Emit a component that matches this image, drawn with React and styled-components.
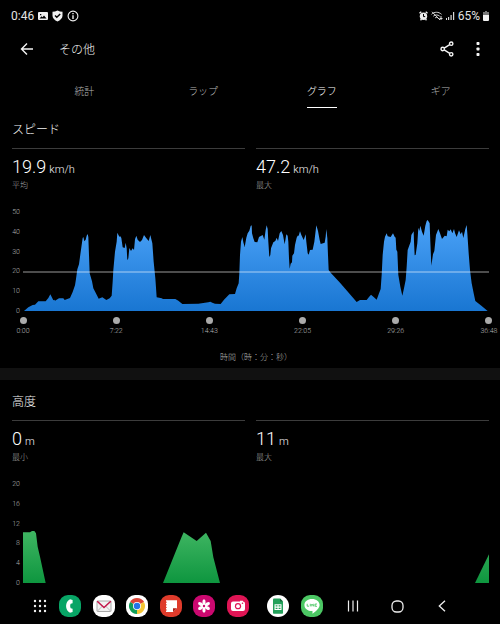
import React from "react";
import styled, { createGlobalStyle } from "styled-components";

const GlobalStyle = createGlobalStyle`
  * { box-sizing: border-box; }
  body {
    margin: 0;
    background: #000;
    color: #f2f2f2;
    font-family: Roboto, "Noto Sans CJK JP", sans-serif;
    font-weight: 300;
  }
  button {
    padding: 0;
    border: 0;
    background: none;
    color: inherit;
    font: inherit;
    cursor: pointer;
  }
  h1, h2, p, dl, dd, dt, figure { margin: 0; }
  svg { display: block; }
`;

const Screen = styled.div`
  display: flex;
  flex-direction: column;
  min-height: 100vh;
`;

const StatusBar = styled.div`
  display: flex;
  align-items: center;
  justify-content: space-between;
  height: 32px;
  padding: 0 11px;
  font-size: 12px;
  line-height: 16px;
  font-weight: 400;
  color: #e4e4e4;
`;

const StatusGroup = styled.div`
  display: flex;
  align-items: center;
  gap: ${(p) => p.$gap}px;
`;

const AppBar = styled.header`
  display: flex;
  align-items: center;
  height: 34px;
  padding: 0 11px 0 16px;
`;

const IconButton = styled.button`
  display: grid;
  place-items: center;
  width: 22px;
  height: 22px;
`;

const Title = styled.h1`
  flex: 1;
  margin-left: 21px;
  padding-top: 2px;
  font-size: 12px;
  line-height: 18px;
  font-weight: inherit;
`;

const Actions = styled.div`
  display: flex;
  gap: 9px;
`;

const Tabs = styled.div`
  display: grid;
  grid-template-columns: repeat(4, 1fr);
  height: 42px;
  padding: 17px 0 0 25px;
`;

const Tab = styled.button`
  justify-self: center;
  align-self: start;
  height: 25px;
  padding-bottom: 6px;
  border-bottom: 1px solid ${(p) => (p.$active ? "#fff" : "transparent")};
  color: ${(p) => (p.$active ? "#fff" : "#b4b4b4")};
  font-size: 10px;
  line-height: 18px;
`;

const Section = styled.section`
  padding: 12px 11px 0 12px;
`;

const SectionTitle = styled.h2`
  font-size: 12px;
  line-height: 20px;
  font-weight: inherit;
`;

const Stats = styled.dl`
  display: grid;
  grid-template-columns: 1fr 1fr;
  gap: 11px;
  margin-top: 8px;
`;

const Stat = styled.div`
  display: flex;
  flex-direction: column-reverse;
  justify-content: flex-end;
  height: 59px;
  padding-top: 7px;
  border-top: 1px solid #3c3c3c;
`;

const StatValue = styled.dd`
  font-size: 18px;
  line-height: 21px;
  color: #fff;
`;

const StatUnit = styled.span`
  margin-left: 3px;
  font-size: 11px;
  color: #f0f0f0;
`;

const StatLabel = styled.dt`
  font-size: 8px;
  line-height: 12px;
  color: #a4a4a4;
`;

const Chart = styled.div`
  display: grid;
  grid-template-columns: 8px 1fr;
  column-gap: 3px;
`;

const ValueAxis = styled.div`
  display: flex;
  flex-direction: column;
  justify-content: space-between;
  align-items: flex-end;
  font-size: 7px;
  line-height: 10px;
  color: #b0b0b0;
`;

const Plot = styled.div`
  padding: 5px 0;

  svg {
    width: 100%;
    height: 99px;
  }
`;

const TimeAxis = styled.div`
  display: flex;
  justify-content: space-between;
  margin: 1px -10px 0 1px;
  font-size: 7px;
  line-height: 10px;
  color: #b8b8b8;
`;

const Tick = styled.div`
  display: flex;
  flex-direction: column;
  align-items: center;
  gap: 2px;
  width: 20px;

  &::before {
    content: "";
    width: 7px;
    height: 7px;
    border-radius: 50%;
    background: #ababab;
  }
`;

const AxisCaption = styled.p`
  margin: 16px 0 4px;
  padding-left: 11px;
  text-align: center;
  font-size: 8px;
  line-height: 12px;
  color: #b4b4b4;
`;

const Separator = styled.div`
  height: 12px;
  background: #111;
`;

const NavBar = styled.nav`
  position: sticky;
  bottom: 0;
  display: grid;
  grid-template-columns: 30fr 208fr 75fr 111fr;
  align-items: center;
  height: 36px;
  margin-top: auto;
  padding: 0 47px 0 29px;
  background: #000;
`;

const NavGroup = styled.div`
  display: flex;
  justify-content: space-between;
  padding-right: ${(p) => p.$end || 0}px;
`;

const speedPoints =
  "3,297 16,286 29,279 36,278 46,268 68,268 76,258 82,247 91,265 94,263 96,266 108,259 121,259 125,264 141,258 149,240 156,220 159,201 163,172 168,157 173,120 179,78 181,75 184,88 188,83 191,71 194,66 196,75 198,129 200,184 207,208 211,229 221,248 227,260 238,256 250,264 260,259 266,251 269,209 271,174 276,119 281,89 283,62 289,74 292,73 295,78 299,106 305,108 308,92 311,109 313,145 316,139 319,108 324,117 329,109 333,114 336,82 340,71 344,83 351,90 357,84 363,69 369,77 377,87 382,69 385,82 388,94 392,149 397,199 401,256 416,259 420,261 457,261 466,266 478,276 526,275 556,271 562,269 568,272 576,275 593,276 603,263 619,247 636,246 641,229 647,214 649,184 651,129 654,89 658,75 661,91 665,105 670,77 674,64 679,56 683,42 686,40 687,64 691,79 695,90 703,91 708,75 719,69 724,83 728,54 731,40 734,51 736,89 739,135 742,129 744,109 751,91 757,87 761,77 765,87 770,64 775,57 780,69 785,97 790,67 794,71 796,89 798,139 800,170 803,155 807,151 808,131 813,124 816,99 821,77 824,71 827,71 831,58 835,69 842,84 848,67 850,89 854,124 857,128 861,114 869,113 874,89 880,40 885,57 890,84 893,96 905,92 908,74 910,51 913,79 915,129 917,174 923,182 951,212 1001,270 1011,264 1031,264 1038,255 1044,248 1052,255 1061,263 1067,247 1073,231 1076,189 1079,129 1083,89 1086,74 1091,64 1094,73 1103,75 1110,64 1115,74 1118,77 1120,113 1123,119 1126,189 1132,224 1138,251 1143,229 1148,204 1151,164 1154,114 1163,89 1165,69 1172,58 1173,89 1175,130 1178,128 1183,94 1186,47 1189,57 1192,41 1197,59 1202,71 1207,41 1211,27 1214,24 1220,34 1222,89 1225,161 1230,127 1234,117 1239,69 1246,51 1251,64 1257,81 1265,71 1271,73 1274,53 1279,58 1283,52 1288,64 1293,51 1296,63 1301,75 1308,55 1313,67 1317,59 1321,78 1327,51 1331,39 1333,64 1337,124 1341,174 1346,214 1352,244 1357,267 1376,282 1394,297";

const altitudePoints = [
  "0,297 0,145 21,145 27,141 34,141 39,148 44,188 51,218 68,297",
  "420,297 456,208 476,158 482,145 521,171 549,146 563,171 571,220 591,297",
  "1356,297 1398,211 1398,297",
];

function AreaChart({ id, label, levels, areas, colors, top, average }) {
  return (
    <Chart>
      <ValueAxis>
        {levels.map((level) => (
          <span key={level}>{level}</span>
        ))}
      </ValueAxis>
      <Plot>
        <svg viewBox="0 0 1398 297" preserveAspectRatio="none" role="img" aria-label={label}>
          <defs>
            <linearGradient id={id} gradientUnits="userSpaceOnUse" x1="0" y1={top} x2="0" y2="297">
              <stop offset="0" stopColor={colors[0]} />
              <stop offset="1" stopColor={colors[1]} />
            </linearGradient>
          </defs>
          {areas.map((points) => (
            <polygon key={points} points={points} fill={`url(#${id})`} />
          ))}
          {average && <rect x="0" y={average} width="1398" height="6" fill="#fff" opacity="0.3" />}
        </svg>
      </Plot>
    </Chart>
  );
}

function StatCards({ items }) {
  return (
    <Stats>
      {items.map(([value, unit, label]) => (
        <Stat key={label}>
          <StatLabel>{label}</StatLabel>
          <StatValue>
            {value}
            <StatUnit>{unit}</StatUnit>
          </StatValue>
        </Stat>
      ))}
    </Stats>
  );
}

const PictureIcon = () => (
  <svg width="10" height="10" viewBox="0 0 10 10">
    <path fill="#f0f0f0" fillRule="evenodd" d="M1 1h8q1 0 1 1v6q0 1-1 1H1Q0 9 0 8V2q0-1 1-1zM1.500 7.500h7L6 4.500 4.500 6.200 3.500 5.200zM2 3v1.300h1.300V3z" />
  </svg>
);

const ShieldIcon = () => (
  <svg width="11" height="12" viewBox="0 0 11 12">
    <path fill="#f0f0f0" d="M5.500 0.500 8 1.400l2.500.3v4.100c0 2.400-2.200 4.500-5 5.700-2.800-1.200-5-3.300-5-5.700V1.700L3 1.400z" />
    <path fill="none" stroke="#000" strokeWidth="1.400" d="m3 5.500 1.800 1.800L8.200 3.900" />
  </svg>
);

const InfoIcon = () => (
  <svg width="12" height="12" viewBox="0 0 12 12">
    <circle cx="6" cy="6" r="4.900" fill="none" stroke="#f0f0f0" strokeWidth="1.100" />
    <path fill="#f0f0f0" d="M5.300 3h1.400v1.300H5.300zM5.300 5.200h1.400V9H5.300z" />
  </svg>
);

const AlarmIcon = () => (
  <svg width="9" height="10" viewBox="0 0 9 10">
    <path d="M0.500 2.200 2.300 0.700M8.500 2.200 6.700 0.700M1.500 9.300l1-1.200M7.500 9.300l-1-1.200" stroke="#eee" strokeWidth="1.400" />
    <circle cx="4.500" cy="5.200" r="3.700" fill="#eee" />
    <path d="M4.500 3v2.600h1.700" fill="none" stroke="#000" />
  </svg>
);

const WifiIcon = () => (
  <svg width="12" height="10" viewBox="0 0 12 10" fill="none" stroke="#d8d8d8">
    <path d="M0.500 3.300C3.500.6 7.500.6 10.500 3.300M2.300 5.200c2-1.700 4.400-1.700 6.400 0M4 7c1-.8 2-.8 3 0" />
    <path d="M1 .8 9 9M10 5v4M8.500 7.500h3" />
  </svg>
);

const SignalIcon = () => (
  <svg width="9" height="10" viewBox="0 0 9 10" fill="#d8d8d8">
    <path d="M0 7h1v2H0zM2 6h1.200v3H2zM4.500 4h1.200v5H4.500zM7 1h1.200v8H7z" />
  </svg>
);

const BatteryIcon = () => (
  <svg width="6" height="10" viewBox="0 0 6 10">
    <path fill="#777" d="M2 0h2v1h2v4H0V1h2z" />
    <path fill="#f2f2f2" d="M0 4h6v5q0 1-1 1H1Q0 10 0 9z" />
  </svg>
);

const BackArrow = () => (
  <svg width="14" height="14" viewBox="0 0 14 14" fill="none" stroke="#f4f4f4" strokeWidth="1.400">
    <path d="M13 7H1.500M7 1.500 1.500 7 7 12.500" />
  </svg>
);

const ShareIcon = () => (
  <svg width="14" height="16" viewBox="0 0 14 16" fill="none" stroke="#f4f4f4" strokeWidth="1.400">
    <circle cx="2.700" cy="8" r="1.700" />
    <circle cx="11.200" cy="2.700" r="1.700" />
    <circle cx="11.200" cy="13.300" r="1.700" />
    <path d="m4.200 7.100 5.500-3.500M4.200 8.900l5.500 3.500" />
  </svg>
);

const MoreIcon = () => (
  <svg width="4" height="14" viewBox="0 0 4 14" fill="#f4f4f4">
    <rect x="0.500" y="0" width="3" height="3" rx="0.700" />
    <rect x="0.500" y="5.500" width="3" height="3" rx="0.700" />
    <rect x="0.500" y="11" width="3" height="3" rx="0.700" />
  </svg>
);

function AppIcon({ color, round, children }) {
  return (
    <svg width="22" height="22" viewBox="0 0 22 22">
      <rect width="22" height="22" rx={round ? 11 : 9} fill={color} />
      {children}
    </svg>
  );
}

const AppsIcon = () => (
  <svg width="22" height="22" viewBox="0 0 22 22" fill="#f0f0f0">
    {[6, 11, 16].map((y) => [6, 11, 16].map((x) => <circle key={`${x}-${y}`} cx={x} cy={y} r="1.200" />))}
  </svg>
);

const PhoneIcon = () => (
  <AppIcon color="#08a566">
    <path fill="#fff" d="M11 4.300 13.600 5v3.300l-1.900.5c-.7 1.400-.7 3 0 4.400l1.900.5v3.400l-2.600.7C5.800 15.400 5.800 6.600 11 4.300z" />
  </AppIcon>
);

const MailIcon = () => (
  <AppIcon color="#fff">
    <rect x="4" y="6" width="14" height="10.500" rx="0.500" fill="#f2f2f2" stroke="#aaa" />
    <path d="m4.500 16 5-5M17.500 16l-5-5" stroke="#bbb" />
    <path d="m4.200 6.200 6.800 6.300 6.800-6.300" fill="none" stroke="#c2184b" strokeWidth="1.500" />
  </AppIcon>
);

const BrowserIcon = () => (
  <AppIcon color="#fff">
    <path fill="#db4437" d="M11 11 4.070 7A8 8 0 0 1 17.930 7z" />
    <path fill="#0f9d58" d="M11 11v8A8 8 0 0 1 4.070 7z" />
    <path fill="#f4c534" d="M11 11 17.930 7A8 8 0 0 1 11 19z" />
    <path fill="#db4437" d="M11 7h6.930L16 5H8z" />
    <circle cx="11" cy="11" r="4" fill="#fff" />
    <circle cx="11" cy="11" r="3.200" fill="#2374e8" />
  </AppIcon>
);

const NotesIcon = () => (
  <AppIcon color="#df3b2b">
    <path fill="#fff" d="M6 5.200h11v8l-4 3.900H6z" />
    <path fill="#ab1e17" d="M17 13.200h-4v3.900z" />
    <path d="M5 7.200h2M5 9.800h2M5 12.400h2M5 15h2" stroke="#df3b2b" strokeWidth="0.800" />
  </AppIcon>
);

const GalleryIcon = () => (
  <AppIcon color="#cb086f">
    {[0, 60, 120, 180, 240, 300].map((angle) => (
      <ellipse key={angle} cx="11" cy="7" rx="1.600" ry="2.700" fill="#fff" transform={`rotate(${angle} 11 11)`} />
    ))}
    <circle cx="11" cy="11" r="2.500" fill="#fff" />
    <circle cx="11" cy="11" r="1.200" fill="#cb086f" />
  </AppIcon>
);

const CameraIcon = () => (
  <AppIcon color="#df1555">
    <path fill="#fff" d="M6 6.500h7V5.700h3v.8q2 0 2 2V14q0 2-2 2H6q-2 0-2-2V8.500q0-2 2-2z" />
    <circle cx="11" cy="11.200" r="3.100" fill="#df1555" />
    <circle cx="11" cy="11.200" r="1.900" fill="#fff" />
    <circle cx="15.500" cy="8.300" r="0.800" fill="#df1555" />
  </AppIcon>
);

const SheetsIcon = () => (
  <AppIcon color="#fff" round>
    <path fill="#23a05a" d="M7 3.500h6l3 3V18q0 .8-.8.8H6.800q-.8 0-.8-.8V4.500q0-1 1-1z" />
    <path fill="#14683a" d="M13 3.500v3h3z" />
    <path fill="#fff" fillRule="evenodd" d="M7.500 9.200h7v5.800h-7zM8.600 10.300v1.200h1.900v-1.200zM11.600 10.300v1.200h1.900v-1.200zM8.600 12.700v1.200h1.900v-1.200zM11.600 12.700v1.200h1.900v-1.200z" />
  </AppIcon>
);

const ChatIcon = () => (
  <AppIcon color="#4cc764">
    <path fill="#fff" d="M11 4c4.300 0 7.600 2.600 7.600 6 0 3.300-3.500 6-7.100 8.700v-2.600C6.700 16.300 3.400 13.600 3.400 10S6.700 4 11 4z" />
    <path d="M6.200 8.800v2.400H8M9.300 8.800v2.600M10.800 11.400V9l2 2.300V8.800M16 9h-1.800v2.300H16" fill="none" stroke="#4cc764" strokeWidth="0.900" />
  </AppIcon>
);

const RecentsIcon = () => (
  <svg width="12" height="12" viewBox="0 0 12 12" stroke="#eee" strokeWidth="1.200">
    <path d="M1.500 .5v11M6 .5v11M10.500 .5v11" />
  </svg>
);

const HomeIcon = () => (
  <svg width="13" height="13" viewBox="0 0 13 13">
    <rect x="1" y="1" width="11" height="11" rx="4.500" fill="none" stroke="#eee" strokeWidth="1.300" />
  </svg>
);

const BackIcon = () => (
  <svg width="8" height="12" viewBox="0 0 8 12">
    <path d="M7 .7 1.300 6 7 11.300" fill="none" stroke="#eee" strokeWidth="1.300" />
  </svg>
);

const dockApps = [
  ["電話", PhoneIcon],
  ["メール", MailIcon],
  ["ブラウザ", BrowserIcon],
  ["ノート", NotesIcon],
  ["ギャラリー", GalleryIcon],
  ["カメラ", CameraIcon],
];

const recentApps = [
  ["スプレッドシート", SheetsIcon],
  ["チャット", ChatIcon],
];

const systemKeys = [
  ["履歴", RecentsIcon],
  ["ホーム", HomeIcon],
  ["戻る", BackIcon],
];

function ButtonGroup({ items, end }) {
  return (
    <NavGroup $end={end}>
      {items.map(([name, Icon]) => (
        <IconButton key={name} type="button" aria-label={name}>
          <Icon />
        </IconButton>
      ))}
    </NavGroup>
  );
}

export default function App() {
  const tabs = ["統計", "ラップ", "グラフ", "ギア"];
  const times = ["0:00", "7:22", "14:43", "22:05", "29:26", "36:48"];

  return (
    <Screen lang="ja">
      <GlobalStyle />
      <StatusBar>
        <StatusGroup $gap={4}>
          <span>0:46</span>
          <PictureIcon />
          <ShieldIcon />
          <InfoIcon />
        </StatusGroup>
        <StatusGroup $gap={3}>
          <AlarmIcon />
          <WifiIcon />
          <SignalIcon />
          <span>65%</span>
          <BatteryIcon />
        </StatusGroup>
      </StatusBar>

      <AppBar>
        <IconButton type="button" aria-label="戻る">
          <BackArrow />
        </IconButton>
        <Title>その他</Title>
        <Actions>
          <IconButton type="button" aria-label="共有">
            <ShareIcon />
          </IconButton>
          <IconButton type="button" aria-label="メニュー">
            <MoreIcon />
          </IconButton>
        </Actions>
      </AppBar>

      <Tabs role="tablist">
        {tabs.map((tab) => (
          <Tab key={tab} type="button" role="tab" aria-selected={tab === "グラフ"} $active={tab === "グラフ"}>
            {tab}
          </Tab>
        ))}
      </Tabs>

      <Section>
        <SectionTitle>スピード</SectionTitle>
        <StatCards items={[["19.9", "km/h", "平均"], ["47.2", "km/h", "最大"]]} />
        <AreaChart
          id="speed-fill"
          label="スピード"
          levels={[50, 40, 30, 20, 10, 0]}
          areas={[speedPoints]}
          colors={["#4ba2f8", "#1976d2"]}
          top={24}
          average={177}
        />
        <TimeAxis>
          {times.map((time) => (
            <Tick key={time}>{time}</Tick>
          ))}
        </TimeAxis>
        <AxisCaption>時間（時：分：秒）</AxisCaption>
      </Section>

      <Separator />

      <Section>
        <SectionTitle>高度</SectionTitle>
        <StatCards items={[["0", "m", "最小"], ["11", "m", "最大"]]} />
        <AreaChart
          id="altitude-fill"
          label="高度"
          levels={[20, 16, 12, 8, 4, 0]}
          areas={altitudePoints}
          colors={["#3fb562", "#0e963f"]}
          top={141}
        />
      </Section>

      <NavBar>
        <ButtonGroup items={[["アプリ一覧", AppsIcon]]} end={8} />
        <ButtonGroup items={dockApps} end={18} />
        <ButtonGroup items={recentApps} end={19} />
        <ButtonGroup items={systemKeys} />
      </NavBar>
    </Screen>
  );
}
